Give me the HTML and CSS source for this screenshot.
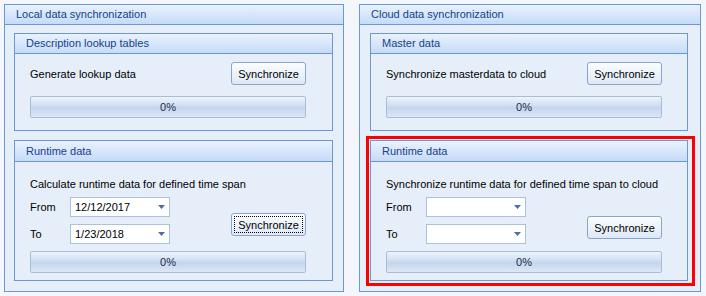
FILE: index.html
```html
<!DOCTYPE html>
<html lang="en">
<head>
    <meta charset="UTF-8">
    <title>Data synchronization</title>
    <link rel="stylesheet" href="styles.css">
</head>
<body>
    <div class="window">
        <!-- Local side -->
        <section class="group group-local">
            <div class="group-title">Local data synchronization</div>
            <div class="group-body">
                <div class="panel panel-short">
                    <div class="panel-title">Description lookup tables</div>
                    <div class="panel-body">
                        <div class="action-row">
                            <span>Generate lookup data</span>
                            <button class="btn">Synchronize</button>
                        </div>
                        <div class="progress"><span class="progress-fill" style="width: 0%"></span><span class="progress-text">0%</span></div>
                    </div>
                </div>

                <div class="panel panel-tall">
                    <div class="panel-title">Runtime data</div>
                    <div class="panel-body">
                        <div class="desc">Calculate runtime data for defined time span</div>
                        <div class="span-row">
                            <div class="fields">
                                <div class="field-row">
                                    <label>From</label>
                                    <div class="combo"><span>12/12/2017</span><svg width="7" height="4" viewBox="0 0 7 4"><polygon points="0,0 7,0 3.5,4" fill="#4a70a8"/></svg></div>
                                </div>
                                <div class="field-row">
                                    <label>To</label>
                                    <div class="combo"><span>1/23/2018</span><svg width="7" height="4" viewBox="0 0 7 4"><polygon points="0,0 7,0 3.5,4" fill="#4a70a8"/></svg></div>
                                </div>
                            </div>
                            <button class="btn btn-focus">Synchronize</button>
                        </div>
                        <div class="progress"><span class="progress-fill" style="width: 0%"></span><span class="progress-text">0%</span></div>
                    </div>
                </div>
            </div>
        </section>

        <!-- Cloud side -->
        <section class="group group-cloud">
            <div class="group-title">Cloud data synchronization</div>
            <div class="group-body">
                <div class="panel panel-short">
                    <div class="panel-title">Master data</div>
                    <div class="panel-body">
                        <div class="action-row">
                            <span>Synchronize masterdata to cloud</span>
                            <button class="btn">Synchronize</button>
                        </div>
                        <div class="progress"><span class="progress-fill" style="width: 0%"></span><span class="progress-text">0%</span></div>
                    </div>
                </div>

                <div class="panel panel-tall">
                    <div class="panel-title">Runtime data</div>
                    <div class="panel-body">
                        <div class="desc">Synchronize runtime data for defined time span to cloud</div>
                        <div class="span-row">
                            <div class="fields">
                                <div class="field-row">
                                    <label>From</label>
                                    <div class="combo"><span></span><svg width="7" height="4" viewBox="0 0 7 4"><polygon points="0,0 7,0 3.5,4" fill="#4a70a8"/></svg></div>
                                </div>
                                <div class="field-row">
                                    <label>To</label>
                                    <div class="combo"><span></span><svg width="7" height="4" viewBox="0 0 7 4"><polygon points="0,0 7,0 3.5,4" fill="#4a70a8"/></svg></div>
                                </div>
                            </div>
                            <button class="btn btn-low">Synchronize</button>
                        </div>
                        <div class="progress"><span class="progress-fill" style="width: 0%"></span><span class="progress-text">0%</span></div>
                    </div>
                </div>
            </div>

            <!-- Highlight marker -->
            <div class="highlight"></div>
        </section>
    </div>
</body>
</html>
```

FILE: styles.css
```css
/* General */
body {
    margin: 0;
    background: #f3f7fc;
    font-family: "Liberation Sans", Arial, sans-serif;
    font-size: 11px;
    color: #000;
}

.window {
    display: flex;
    gap: 15px;
    padding: 4px 0 0 4px;
}

/* Outer groups */
.group {
    position: relative;
    box-sizing: border-box;
    height: 288px;
    border: 1px solid #6a98d2;
    background: #e6eefa;
}

.group-local {
    width: 340px;
}

.group-cloud {
    width: 342px;
}

.group-title,
.panel-title {
    height: 19px;
    line-height: 19px;
    padding-left: 11px;
    border-bottom: 1px solid #6a98d2;
    background: linear-gradient(to bottom, #e9f2fe, #c6dbf7);
    color: #15428b;
}

.group-body {
    padding: 8px 0 0 9px;
}

.group-cloud .group-body {
    padding-left: 10px;
}

/* Inner panels */
.panel {
    box-sizing: border-box;
    width: 319px;
    border: 1px solid #6a98d2;
    background: #e6eefa;
}

.group-cloud .panel {
    width: 318px;
}

.panel-tall {
    margin-top: 9px;
}

.panel-tall .panel-title {
    height: 20px;
    line-height: 20px;
}

.panel-body {
    padding: 8px 0 12px 15px;
}

.panel-tall .panel-body {
    padding: 15px 0 7px 15px;
}

.action-row {
    display: flex;
    justify-content: space-between;
    align-items: center;
    width: 276px;
    height: 23px;
    margin-bottom: 11px;
}

.desc {
    line-height: 14px;
    margin-bottom: 6px;
}

.span-row {
    display: flex;
    justify-content: space-between;
    align-items: flex-start;
    width: 276px;
    margin-bottom: 7px;
}

.fields {
    display: flex;
    flex-direction: column;
    gap: 7px;
}

.field-row {
    display: flex;
    align-items: center;
}

.field-row label {
    width: 40px;
}

.combo {
    box-sizing: border-box;
    display: flex;
    justify-content: space-between;
    align-items: center;
    width: 100px;
    height: 20px;
    padding: 0 4px 0 4px;
    border: 1px solid #abc1de;
    background: #fff;
}

.combo svg {
    display: block;
}

/* Buttons */
.btn {
    box-sizing: border-box;
    width: 75px;
    height: 23px;
    padding: 0;
    border: 1px solid #8aa5cb;
    border-radius: 3px;
    background: linear-gradient(to bottom, #fbfdff, #dde8f6);
    font-family: inherit;
    font-size: 11px;
    color: #000;
}

.btn-focus {
    margin-top: 16px;
    outline: 1px dotted #000;
    outline-offset: -4px;
}

.btn-low {
    margin-top: 19px;
}

/* Progress bar */
.progress {
    position: relative;
    box-sizing: border-box;
    width: 276px;
    height: 22px;
    border: 1px solid #a9bdd8;
    border-radius: 2px;
    background: linear-gradient(to bottom, #edf3fb 0%, #d6e3f4 35%, #c3d5ee 55%, #dde8f6 100%);
}

.progress-fill {
    display: block;
    height: 100%;
    background: #6fa0dc;
}

.progress-text {
    position: absolute;
    inset: 0;
    line-height: 20px;
    text-align: center;
    color: #1b2b45;
}

/* Red marker over the cloud runtime panel */
.highlight {
    position: absolute;
    left: 6px;
    top: 131px;
    width: 329px;
    height: 150px;
    box-sizing: border-box;
    border: 3px solid #ff0000;
    pointer-events: none;
}
```
